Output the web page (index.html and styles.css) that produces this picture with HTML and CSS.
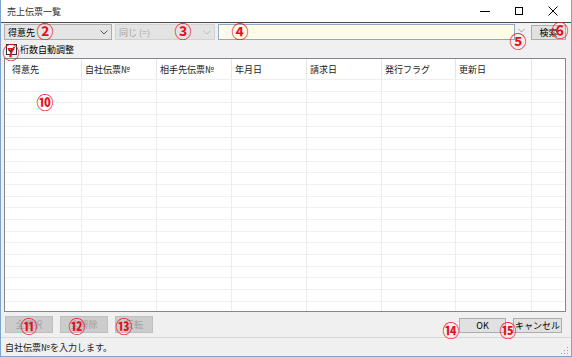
FILE: index.html
```html
<!DOCTYPE html>
<html lang="ja">
<head>
<meta charset="utf-8">
<title>売上伝票一覧</title>
<link rel="stylesheet" href="styles.css">
</head>
<body>
<div class="window">
  <div class="titlebar">
    <span class="title">売上伝票一覧</span>
    <div class="controls">
      <div class="ctl"><svg width="10" height="10" viewBox="0 0 10 10"><path d="M0 5.5 H10" stroke="#000" stroke-width="1"/></svg></div>
      <div class="ctl"><svg width="10" height="10" viewBox="0 0 10 10"><rect x="1.5" y="1.5" width="7" height="7" fill="none" stroke="#000" stroke-width="1"/></svg></div>
      <div class="ctl"><svg width="10" height="10" viewBox="0 0 10 10"><path d="M0.5 0.5 L9.5 9.5 M9.5 0.5 L0.5 9.5" stroke="#000" stroke-width="1"/></svg></div>
    </div>
  </div>
  <div class="client">
    <div class="toolbar">
      <div class="combo combo-main">
        <span class="combo-text">得意先</span>
        <svg class="chev" width="8" height="5" viewBox="0 0 8 5"><path d="M0.5 0.5 L4 4 L7.5 0.5" fill="none" stroke="#555" stroke-width="1"/></svg>
      </div>
      <div class="combo combo-cond disabled">
        <span class="combo-text">同じ (=)</span>
        <svg class="chev" width="8" height="5" viewBox="0 0 8 5"><path d="M0.5 0.5 L4 4 L7.5 0.5" fill="none" stroke="#c0c0c0" stroke-width="1"/></svg>
      </div>
      <div class="search-group">
        <div class="textbox"></div>
        <div class="drop-btn"><svg width="7" height="5" viewBox="0 0 7 5"><path d="M0.5 1 L3.5 4 L6.5 1" fill="none" stroke="#a0a0a0" stroke-width="1"/></svg></div>
      </div>
      <div class="btn btn-search">検索</div>
    </div>
    <div class="check-row">
      <span class="checkbox"><svg width="9" height="9" viewBox="0 0 9 9"><path d="M1.5 4.5 L3.5 6.5 L7.5 2" fill="none" stroke="#222" stroke-width="1.3"/></svg></span>
      <span class="check-label">桁数自動調整</span>
    </div>
    <div class="list">
      <div class="list-header">
        <div class="hcell first">得意先</div>
        <div class="hcell">自社伝票№</div>
        <div class="hcell">相手先伝票№</div>
        <div class="hcell">年月日</div>
        <div class="hcell">請求日</div>
        <div class="hcell">発行フラグ</div>
        <div class="hcell">更新日</div>
        <div class="hcell last"></div>
      </div>
      <div class="list-body">
        <div class="bcol"></div>
        <div class="bcol"></div>
        <div class="bcol"></div>
        <div class="bcol"></div>
        <div class="bcol"></div>
        <div class="bcol"></div>
        <div class="bcol"></div>
        <div class="bcol last"></div>
      </div>
    </div>
    <div class="btn-row">
      <div class="btn-group">
        <div class="btn disabled w48">全選択</div>
        <div class="btn disabled w48">全解除</div>
        <div class="btn disabled w38">反転</div>
      </div>
      <div class="btn-group right">
        <div class="btn btn-ok">OK</div>
        <div class="btn btn-cancel">キャンセル</div>
      </div>
    </div>
  </div>
  <div class="status">
    <span class="status-text">自社伝票№を入力します。</span>
    <svg class="grip" width="9" height="9" viewBox="0 0 9 9">
      <rect x="7" y="1" width="1" height="1" fill="#a0a0a0"/>
      <rect x="4" y="4" width="1" height="1" fill="#a0a0a0"/>
      <rect x="7" y="4" width="1" height="1" fill="#a0a0a0"/>
      <rect x="1" y="7" width="1" height="1" fill="#a0a0a0"/>
      <rect x="4" y="7" width="1" height="1" fill="#a0a0a0"/>
      <rect x="7" y="7" width="1" height="1" fill="#a0a0a0"/>
    </svg>
  </div>

  <span class="ann a2">②</span>
  <span class="ann a3">③</span>
  <span class="ann a4">④</span>
  <span class="ann a5">⑤</span>
  <span class="ann a6">⑥</span>
  <span class="ann a7">⑦</span>
  <span class="ann a10">⑩</span>
  <span class="ann a11">⑪</span>
  <span class="ann a12">⑫</span>
  <span class="ann a13">⑬</span>
  <span class="ann a14">⑭</span>
  <span class="ann a15">⑮</span>
</div>
</body>
</html>
```

FILE: styles.css
```css
* { box-sizing: border-box; }
html, body { margin: 0; padding: 0; }
body {
  width: 572px;
  height: 357px;
  overflow: hidden;
  background: #f0f0f0;
  font-family: "Noto Sans CJK JP", "Noto Sans", sans-serif;
  font-size: 9px;
  color: #000;
}
.window {
  position: relative;
  width: 572px;
  height: 357px;
  display: flex;
  flex-direction: column;
  border: 1px solid #7ba4cf;
  border-top: 0;
  background: #f0f0f0;
}
.titlebar {
  height: 23px;
  flex: none;
  background: #fff;
  border-bottom: 1px solid #4a4a4a;
  display: flex;
  align-items: center;
  padding-left: 6px;
}
.title { flex: 1; color: #333; font-size: 9px; }
.controls { display: flex; height: 100%; margin-right: 1px; }
.ctl {
  width: 34px;
  display: flex;
  align-items: center;
  justify-content: center;
}
.client {
  flex: 1;
  display: flex;
  flex-direction: column;
  padding: 1px 4px 0 3px;
}
.toolbar {
  height: 16px;
  display: flex;
  gap: 3px;
  flex: none;
}
.combo {
  height: 16px;
  display: flex;
  align-items: center;
  justify-content: space-between;
  border: 1px solid #acacac;
  background: #e5e5e5;
  padding: 0 3px 0 3px;
}
.combo-main { width: 108px; }
.combo-cond { width: 100px; }
.combo.disabled { background: #e3e3e3; border-color: #d2d2d2; color: #a3a3a3; }
.chev { flex: none; }
.search-group { display: flex; width: 310px; }
.textbox {
  width: 297px;
  height: 16px;
  background: #fffde8;
  border: 1px solid #8fa8c6;
}
.drop-btn {
  width: 13px;
  height: 16px;
  display: flex;
  align-items: flex-start;
  justify-content: center;
  padding-top: 4px;
}
.btn {
  height: 15px;
  display: flex;
  align-items: center;
  justify-content: center;
  background: #e1e1e1;
  border: 1px solid #adadad;
  color: #000;
}
.btn-search { width: 35px; height: 15px; margin-top: 1px; }
.check-row {
  height: 16px;
  margin-top: 1px;
  display: flex;
  align-items: center;
  padding-left: 2px;
  flex: none;
}
.checkbox {
  width: 11px;
  height: 11px;
  border: 1px solid #333;
  background: #fff;
  display: flex;
  align-items: center;
  justify-content: center;
}
.check-label { margin-left: 3px; }
.list {
  height: 254px;
  margin-top: 1px;
  flex: none;
  width: 562px;
  border: 1px solid #828790;
  background: #fff;
  display: flex;
  flex-direction: column;
}
.list-header, .list-body {
  display: grid;
  grid-template-columns: 77px 75px 75px 75px 75px 74px 76px 1fr;
}
.list-header {
  height: 21px;
  border-bottom: 1px solid #efefef;
  flex: none;
}
.hcell {
  border-right: 1px solid #e5e5e5;
  padding-left: 3px;
  display: flex;
  align-items: center;
  color: #1a1a1a;
  white-space: nowrap;
}
.hcell.first { padding-left: 7px; }
.hcell.last, .bcol.last { border-right: 0; }
.list-body {
  flex: 1;
  background-image: repeating-linear-gradient(to bottom, transparent 0, transparent 10.67px, #f0f0f0 10.67px, #f0f0f0 11.67px);
}
.bcol { border-right: 1px solid #ececec; }
.btn-row {
  height: 25px;
  flex: none;
  display: flex;
  align-items: center;
  justify-content: space-between;
  padding: 0 5px 0 1px;
}
.btn-group { display: flex; gap: 7px; }
.btn.disabled {
  background: #cccccc;
  border-color: #bfbfbf;
  color: #a0a0a0;
  height: 17px;
}
.w48 { width: 48px; }
.w38 { width: 38px; }
.btn-ok { width: 47px; }
.btn-cancel { width: 49px; }
.btn-group.right { margin-top: 2px; }
.status {
  height: 19px;
  flex: none;
  border-top: 1px solid #d9d9d9;
  display: flex;
  align-items: center;
  justify-content: space-between;
  padding-left: 4px;
  position: relative;
}
.status-text { color: #1a1a1a; }
.grip { align-self: flex-end; margin-right: 2px; margin-bottom: 1px; }
.ann {
  position: absolute;
  color: #e8101a;
  font-family: "Noto Sans CJK JP", sans-serif;
  font-size: 17px;
  font-weight: 700;
  line-height: 1;
  transform: translate(-50%, -50%);
}
.a2 { left: 44px; top: 30px; }
.a3 { left: 182px; top: 30px; }
.a4 { left: 239px; top: 30px; }
.a5 { left: 517px; top: 40px; }
.a6 { left: 559px; top: 29px; }
.a7 { left: 10px; top: 51px; }
.a10 { left: 44px; top: 101px; }
.a11 { left: 28px; top: 325px; }
.a12 { left: 76px; top: 325px; }
.a13 { left: 123px; top: 325px; }
.a14 { left: 450px; top: 329px; }
.a15 { left: 507px; top: 329px; }
```
